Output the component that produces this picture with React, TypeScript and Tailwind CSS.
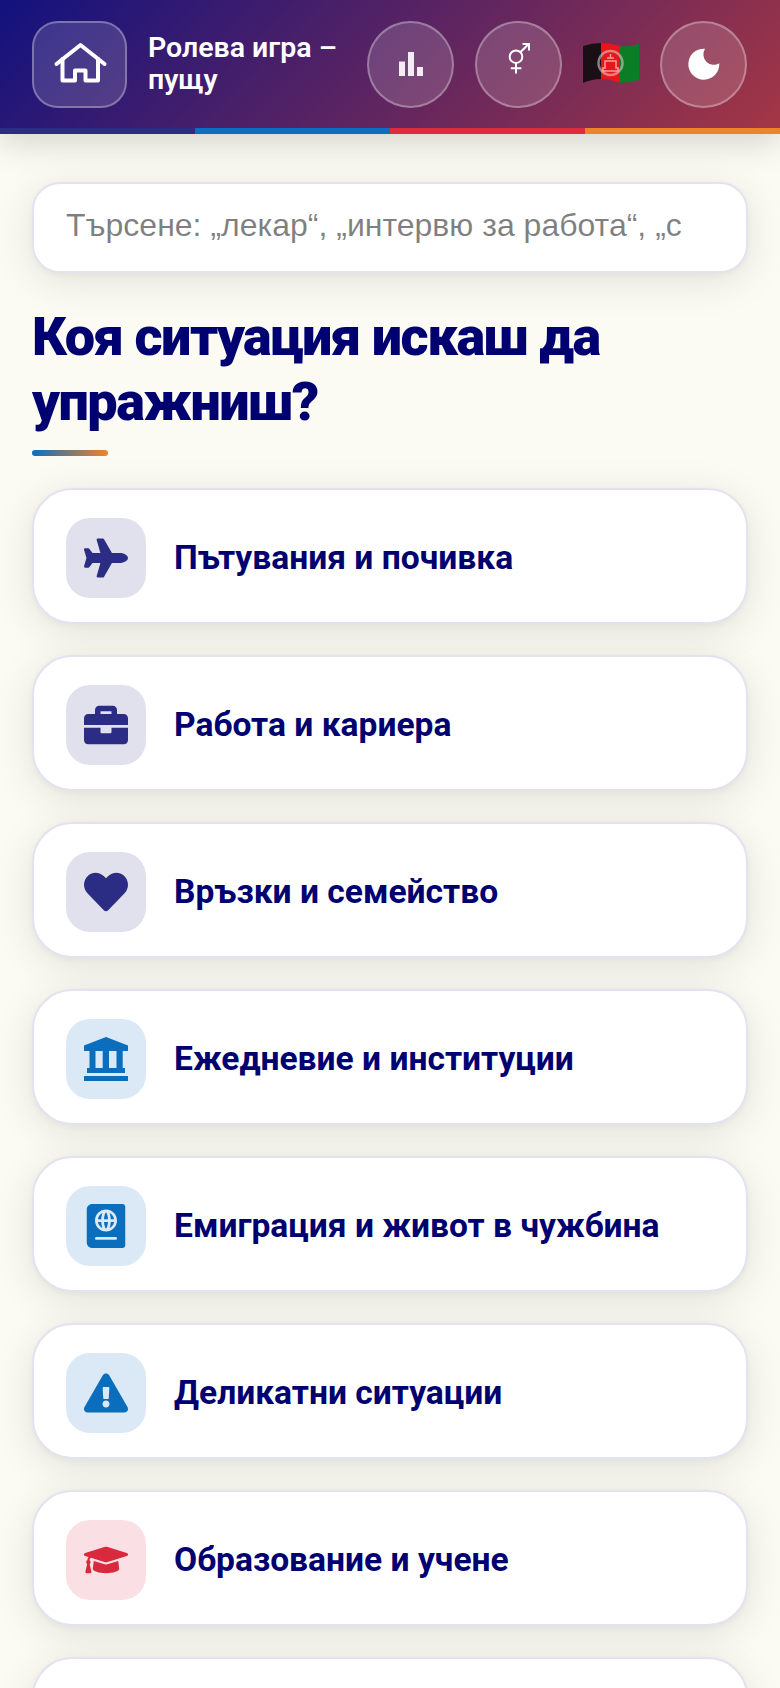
import { FaPlane, FaBriefcase, FaHeart, FaPassport, FaExclamationTriangle, FaGraduationCap } from 'react-icons/fa'

const navyBox = 'bg-[#e1e1ee] text-[#2b2d85]'
const blueBox = 'bg-[#dbe9f6] text-[#0a6ebd]'
const redBox = 'bg-[#fadfe4] text-[#d9293c]'

function BankIcon({ size }: { size: number }) {
  return (
    <svg width={size} height={size} viewBox="0 0 44 44" fill="currentColor">
      <path d="M22 0 L44 8.5 V14 H0 V8.5 Z" />
      <path d="M5.5 14h6v17h-6zM18.7 14h6.3v17h-6.3zM32.5 14h6.2v17h-6.2z" />
      <path d="M3 31h38v5H3zM0 39h44v5H0z" />
    </svg>
  )
}

const situations = [
  { label: 'Пътувания и почивка', icon: FaPlane, box: navyBox },
  { label: 'Работа и кариера', icon: FaBriefcase, box: navyBox },
  { label: 'Връзки и семейство', icon: FaHeart, box: navyBox },
  { label: 'Ежедневие и институции', icon: BankIcon, box: blueBox },
  { label: 'Емиграция и живот в чужбина', icon: FaPassport, box: blueBox },
  { label: 'Деликатни ситуации', icon: FaExclamationTriangle, box: blueBox },
  { label: 'Образование и учене', icon: FaGraduationCap, box: redBox },
]

function HomeIcon() {
  return (
    <svg width="58" height="48" viewBox="0 0 58 48" fill="none" stroke="white" strokeWidth="4" strokeLinecap="round" strokeLinejoin="round">
      <path d="M5.5 24 L29.5 5 L53.5 24" />
      <path d="M11.5 19 V40.5 H24 V30.5 H34.5 V40.5 H47 V19" />
    </svg>
  )
}

function BarsIcon() {
  return (
    <svg width="24" height="24" viewBox="0 0 24 24" fill="white" fillOpacity="0.9">
      <path d="M0 9.5h6V24H0zM9 0h6v24H9zM18 15h6v9h-6z" />
    </svg>
  )
}

function GenderIcon() {
  return (
    <svg className="-mt-2" width="28" height="34" viewBox="0 0 28 34" fill="none" stroke="white" strokeWidth="2">
      <circle cx="11" cy="13.7" r="6.3" />
      <path d="M11 20 V30.5 M5.8 25.3 H16.4 M15.5 9 L23.5 1.2 M17.5 1 H24 V7.5" />
    </svg>
  )
}

function MoonIcon() {
  return (
    <svg width="40" height="40" viewBox="0 0 40 40" fill="white">
      <path d="M21 4.7 A15.5 15.5 0 1 0 35.3 19.3 A10.5 10.5 0 0 1 21 4.7 Z" />
    </svg>
  )
}

function FlagIcon() {
  return (
    <svg width="56" height="42" viewBox="0 0 56 42">
      <path d="M0 3 Q9 0 18 0 V36 Q9 36 0 40 Z" fill="#1a0f14" />
      <path d="M18 0 Q27 0 37 3 V40 Q27 36 18 36 Z" fill="#e8151c" />
      <path d="M37 3 Q46 4 56 1 V37 Q46 40 37 40 Z" fill="#0d7c26" />
      <circle cx="27.5" cy="20" r="12" fill="none" stroke="#d9c9c9" strokeWidth="2.5" strokeOpacity="0.6" />
      <path d="M20 28 H35 V25 H33 V18 H22 V25 H20 Z M24 15 H31 M27.5 11 V15" fill="none" stroke="#ffc8c0" strokeWidth="1.5" strokeOpacity="0.75" />
    </svg>
  )
}

function Round({ children }: { children: React.ReactNode }) {
  return (
    <div className="w-[87px] h-[87px] shrink-0 rounded-full bg-white/15 border-2 border-white/30 flex items-center justify-center">
      {children}
    </div>
  )
}

const cardShadow = 'shadow-[0_8px_40px_rgba(0,0,0,0.1),0_2px_6px_rgba(0,0,40,0.04)]'

export default function App() {
  return (
    <div className="h-[1688px] overflow-hidden bg-[#fbfbf3] font-['Roboto',sans-serif]">
      <header className="relative shadow-[0_8px_32px_rgba(0,0,0,0.16)]">
        <div className="h-[128px] pl-8 pr-[33px] flex items-center gap-[21px] bg-[linear-gradient(135deg,#12127f,#a33645)]">
          <div className="w-[95px] h-[87px] shrink-0 rounded-[26px] bg-white/15 border-2 border-white/30 flex items-center justify-center">
            <HomeIcon />
          </div>
          <div className="flex-1 text-white text-[28.5px] leading-[32px] font-semibold">Ролева игра – пущу</div>
          <Round><BarsIcon /></Round>
          <Round><GenderIcon /></Round>
          <div className="w-[56px] shrink-0"><FlagIcon /></div>
          <Round><MoonIcon /></Round>
        </div>
        <div className="h-[6px] grid grid-cols-4">
          <div className="bg-[#2b2d85]" />
          <div className="bg-[#0a6fc0]" />
          <div className="bg-[#dc2b3f]" />
          <div className="bg-[#ef8427]" />
        </div>
      </header>

      <main className="px-8 pt-[48px]">
        <input
          placeholder="Търсене: „лекар“, „интервю за работа“, „семейство“…"
          className={`w-full h-[91px] pl-8 pr-[64px] pb-[4px] rounded-[28px] bg-white border-2 border-[#e3e3f0] text-[32px] font-['Liberation_Sans',sans-serif] outline-none ${cardShadow}`}
        />
        <h1 className="mt-[31px] text-[54px] leading-[65px] font-black tracking-[-1.5px] text-[#000070]">Коя ситуация искаш да упражниш?</h1>
        <div className="mt-[16px] w-[76px] h-[6px] rounded-full bg-[linear-gradient(90deg,#0a6fc0,#ef8427)]" />

        <div className="mt-[32px] flex flex-col gap-[31px]">
          {situations.map(({ label, icon: Icon, box }) => (
            <div key={label} className={`h-[136px] px-8 pt-[4px] flex items-center gap-[28px] rounded-[40px] bg-white border-2 border-[#e3e3f0] ${cardShadow}`}>
              <div className={`w-[80px] h-[80px] shrink-0 rounded-[24px] flex items-center justify-center ${box}`}>
                <Icon size={44} />
              </div>
              <span className="text-[33.6px] font-bold text-[#000070]">{label}</span>
            </div>
          ))}
          <div className={`h-[136px] rounded-[40px] bg-white border-2 border-[#e3e3f0] ${cardShadow}`} />
        </div>
      </main>
    </div>
  )
}
